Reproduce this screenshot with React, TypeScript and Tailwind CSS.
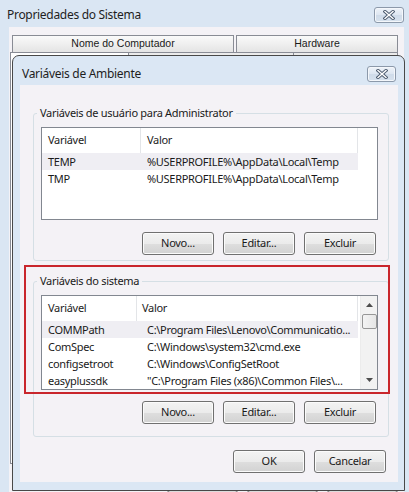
import React from "react";

const ui = "font-['Noto_Sans',sans-serif] text-[11px] tracking-[-0.3px] text-[#1a1a1a]";

function CloseButton({ className }: { className: string }) {
  return (
    <div
      className={`flex items-center justify-center rounded-[3px] border border-[#8c99aa] bg-[linear-gradient(#eef3f9_0%,#dde6f1_50%,#cfdbe9_51%,#d7e2ee_100%)] shadow-[inset_0_0_0_1px_#f4f7fb] ${className}`}
    >
      <svg width="12" height="10" viewBox="0 0 12 10">
        <path d="M2 1.5 L10 8.5 M10 1.5 L2 8.5" stroke="#4b5a6e" strokeWidth="3.2" strokeLinecap="square" />
        <path d="M2 1.5 L10 8.5 M10 1.5 L2 8.5" stroke="#ffffff" strokeWidth="1.4" strokeLinecap="square" />
      </svg>
    </div>
  );
}

function Button({ label }: { label: string }) {
  return (
    <div className="flex h-[23px] w-[72px] items-center justify-center rounded-[3px] border border-[#707070] bg-[linear-gradient(#f3f3f3_0%,#ebebeb_50%,#dedede_51%,#d2d2d2_100%)] shadow-[inset_0_0_0_1px_#fbfbfb]">
      {label}
    </div>
  );
}

interface Column {
  title: string;
  width: number;
  headPad: number;
  rowPad: number;
}

function ListView({
  columns,
  rows,
  height,
  scroll,
}: {
  columns: Column[];
  rows: string[][];
  height: string;
  scroll?: boolean;
}) {
  return (
    <div className={`flex overflow-hidden border border-[#828790] bg-white ${height}`}>
      <div className="min-w-0 flex-1">
        {/* header */}
        <div className="flex h-[25px]">
          {columns.map((c) => (
            <div
              key={c.title}
              className="flex shrink-0 items-center border-r border-[#e3e5e8] text-[#222]"
              style={{ width: c.width, paddingLeft: c.headPad }}
            >
              {c.title}
            </div>
          ))}
          <div className="flex-1" />
        </div>
        {rows.map((r, i) => (
          <div key={r[0]} className="flex h-[17px] items-center">
            <div className={`flex ${i === 0 ? "bg-[#efeef3]" : ""}`}>
              {r.map((cell, j) => (
                <div
                  key={j}
                  className="shrink-0 overflow-hidden whitespace-nowrap leading-[17px]"
                  style={{ width: columns[j].width, paddingLeft: columns[j].rowPad }}
                >
                  {cell}
                </div>
              ))}
            </div>
          </div>
        ))}
      </div>
      {scroll && (
        <div className="flex w-[17px] shrink-0 flex-col items-center border-l border-[#ececec] bg-[#f2f2f2]">
          <div className="flex h-[18px] items-center justify-center">
            <svg width="7" height="4" viewBox="0 0 7 4">
              <path d="M0 4 L3.5 0 L7 4 Z" fill="#4d4d4d" />
            </svg>
          </div>
          <div className="h-[15px] w-[15px] rounded-[2px] border border-[#979797] bg-[linear-gradient(90deg,#f4f4f4,#e6e6e6)]" />
          <div className="flex-1" />
          <div className="flex h-[18px] items-center justify-center">
            <svg width="7" height="4" viewBox="0 0 7 4">
              <path d="M0 0 L7 0 L3.5 4 Z" fill="#4d4d4d" />
            </svg>
          </div>
        </div>
      )}
    </div>
  );
}

function Group({
  title,
  children,
  className,
}: {
  title: string;
  children: React.ReactNode;
  className: string;
}) {
  return (
    <fieldset className={`rounded-[3px] border border-[#d5dfe5] pl-[7px] pr-[10px] ${className}`}>
      <legend className="-ml-[4px] px-[3px] leading-[16px]">{title}</legend>
      {children}
    </fieldset>
  );
}

export default function App() {
  const userCols: Column[] = [
    { title: "Variável", width: 99, headPad: 6, rowPad: 6 },
    { title: "Valor", width: 217, headPad: 6, rowPad: 6 },
  ];
  const sysCols: Column[] = [
    { title: "Variável", width: 95, headPad: 6, rowPad: 6 },
    { title: "Valor", width: 221, headPad: 5, rowPad: 10 },
  ];

  return (
    <div className={`relative h-[492px] w-[409px] overflow-hidden bg-[#dae6f3] ${ui}`}>
      {/* Propriedades do Sistema (behind) */}
      <div className="flex h-[27px] items-start justify-between pl-[7px] pr-[5px] pt-[7px]">
        <span className="text-[12px] leading-[16px] tracking-[-0.3px] text-[#1e1e1e]">Propriedades do Sistema</span>
        <CloseButton className="h-[16px] w-[30px]" />
      </div>
      <div className="ml-[9px] mr-[5px] h-[465px] bg-[#f4f2f6] pt-[8px] font-['Liberation_Sans',sans-serif] text-[10.5px] tracking-normal">
        <div className="ml-[3px] flex h-[17px] gap-[2px]">
          <div className="flex w-[222px] items-center justify-center border border-b-0 border-[#898c95] bg-[linear-gradient(#fafafa,#e4e4e4)]">
            Nome do Computador
          </div>
          <div className="flex w-[162px] items-center justify-center border border-b-0 border-[#898c95] bg-[linear-gradient(#fafafa,#e4e4e4)]">
            Hardware
          </div>
        </div>
        <div className="ml-[1px] flex h-[20px]">
          <div className="w-[119px] border border-b-0 border-[#898c95] bg-white" />
          <div className="w-[165px] border-r border-t border-[#898c95] bg-[#ebebeb]" />
          <div className="w-[104px] border-r border-t border-[#898c95] bg-[#ebebeb]" />
        </div>
        <div className="ml-[1px] mr-[1px] h-[392px] border border-t-0 border-[#898c95] bg-white" />
        <div className="mt-[6px] flex gap-[9px] pl-[158px]">
          <div className="h-[23px] w-[71px] rounded-[3px] border border-[#707070] bg-[#dcdcdc]" />
          <div className="h-[23px] w-[71px] rounded-[3px] border border-[#707070] bg-[#dcdcdc]" />
          <div className="h-[23px] w-[71px] rounded-[3px] border border-[#707070] bg-[#dcdcdc]" />
        </div>
      </div>

      {/* Variáveis de Ambiente dialog on top */}
      <div className="absolute left-[12px] top-[55px] flex h-[436px] w-[393px] flex-col rounded-t-[7px] border border-[#484848] bg-[#dbe7f4]">
        <div className="flex h-[29px] shrink-0 items-start justify-between pl-[9px] pr-[8px] pt-[10px]">
          <span className="text-[12px] leading-[16px] tracking-[-0.3px] text-[#1e1e1e]">Variáveis de Ambiente</span>
          <CloseButton className="h-[16px] w-[29px]" />
        </div>
        <div className="relative ml-[7px] mr-[6px] h-[397px] bg-[#f4f2f6]">
          <Group title="Variáveis de usuário para Administrator" className="ml-[13px] mr-[9px] mt-[20px] pb-[5px]">
            <div className="mt-[6px]">
              <ListView
                columns={userCols}
                height="h-[93px]"
                rows={[
                  ["TEMP", "%USERPROFILE%\\AppData\\Local\\Temp"],
                  ["TMP", "%USERPROFILE%\\AppData\\Local\\Temp"],
                ]}
              />
            </div>
            <div className="mt-[12px] flex justify-end gap-[9px] pr-[2px]">
              <Button label="Novo..." />
              <Button label="Editar..." />
              <Button label="Excluir" />
            </div>
          </Group>

          <Group title="Variáveis do sistema" className="ml-[13px] mr-[9px] mt-[12px] pb-[12px]">
            <div className="mt-[6px]">
              <ListView
                columns={sysCols}
                height="h-[95px]"
                scroll
                rows={[
                  ["COMMPath", "C:\\Program Files\\Lenovo\\Communicatio..."],
                  ["ComSpec", "C:\\Windows\\system32\\cmd.exe"],
                  ["configsetroot", "C:\\Windows\\ConfigSetRoot"],
                  ["easyplussdk", "\"C:\\Program Files (x86)\\Common Files\\..."],
                ]}
              />
            </div>
            <div className="mt-[11px] flex justify-end gap-[9px] pr-[2px]">
              <Button label="Novo..." />
              <Button label="Editar..." />
              <Button label="Excluir" />
            </div>
          </Group>

          <div className="mt-[13px] flex justify-end gap-[9px] pr-[12px]">
            <Button label="OK" />
            <Button label="Cancelar" />
          </div>

          {/* red highlight annotation */}
          <div className="absolute left-[4px] top-[180px] h-[129px] w-[366px] border-2 border-[#c9262c]" />
        </div>
      </div>
    </div>
  );
}
